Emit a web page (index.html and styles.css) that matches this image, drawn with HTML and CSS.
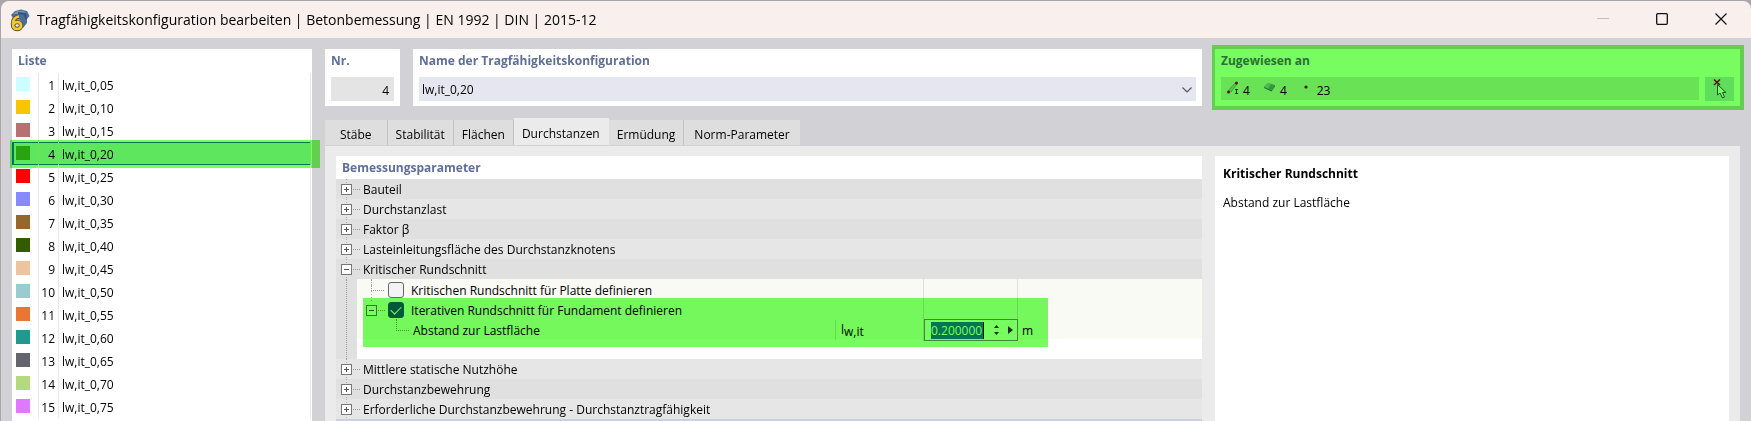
FILE: index.html
```html
<!DOCTYPE html>
<html lang="de">
<head>
    <meta charset="UTF-8">
    <meta name="viewport" content="width=device-width, initial-scale=1.0">
    <title>Tragfähigkeitskonfiguration bearbeiten</title>
    <link rel="stylesheet" href="styles.css">
</head>
<body>
    <div class="window">
        <header class="titlebar">
            <svg class="app-icon" width="20" height="24" viewBox="0 0 20 24">
                <path d="M1 7 L5 3 L11 1.500 L17 3 L19.500 8 L17 11 L17 15 L13 20 L10 12 L3 10 Z" fill="#4a6d9c"/>
                <path d="M3 6 L7 3 L14 3 L16 5 L9 6 Z" fill="#7795b8"/>
                <path d="M8 5 L15 6 L16 11" fill="none" stroke="#31547f" stroke-width="2"/>
                <path d="M9 8.500 C5 9 3 12 3 16 C3 19.500 4.500 21 7 21 C9.500 21 11 19.500 11 17.500 C11 15.500 9.500 14 7.500 14 C5 14 3.500 15 3 17" fill="none" stroke="#5c5640" stroke-width="4.500"/>
                <path d="M9 8.500 C5 9 3 12 3 16 C3 19.500 4.500 21 7 21 C9.500 21 11 19.500 11 17.500 C11 15.500 9.500 14 7.500 14 C5 14 3.500 15 3 17" fill="none" stroke="#f2ca2c" stroke-width="2.600"/>
            </svg>
            <h1>Tragfähigkeitskonfiguration bearbeiten | Betonbemessung | EN 1992 | DIN | 2015-12</h1>
            <div class="window-buttons">
                <button type="button" aria-label="Minimieren" disabled>
                    <svg width="12" height="12" viewBox="0 0 12 12"><path d="M0 5.5H12" stroke="#c5bfbe"/></svg>
                </button>
                <button type="button" aria-label="Maximieren">
                    <svg width="12" height="12" viewBox="0 0 12 12"><rect x="0.7" y="0.7" width="10.6" height="10.6" rx="1" fill="none" stroke="#111" stroke-width="1.3"/></svg>
                </button>
                <button type="button" aria-label="Schließen">
                    <svg width="12" height="12" viewBox="0 0 12 12"><path d="M0.5 0.5L11.5 11.5M11.5 0.5L0.5 11.5" stroke="#111" stroke-width="1.2"/></svg>
                </button>
            </div>
        </header>

        <main class="content">
            <section class="panel list">
                <h2>Liste</h2>
                <table>
                    <tr><td><i class="swatch c1"></i></td><td>1</td><td>lw,it_0,05</td></tr>
                    <tr><td><i class="swatch c2"></i></td><td>2</td><td>lw,it_0,10</td></tr>
                    <tr><td><i class="swatch c3"></i></td><td>3</td><td>lw,it_0,15</td></tr>
                    <tr class="selected"><td><i class="swatch c4"></i></td><td>4</td><td>lw,it_0,20<div class="marker"></div></td></tr>
                    <tr><td><i class="swatch c5"></i></td><td>5</td><td>lw,it_0,25</td></tr>
                    <tr><td><i class="swatch c6"></i></td><td>6</td><td>lw,it_0,30</td></tr>
                    <tr><td><i class="swatch c7"></i></td><td>7</td><td>lw,it_0,35</td></tr>
                    <tr><td><i class="swatch c8"></i></td><td>8</td><td>lw,it_0,40</td></tr>
                    <tr><td><i class="swatch c9"></i></td><td>9</td><td>lw,it_0,45</td></tr>
                    <tr><td><i class="swatch c10"></i></td><td>10</td><td>lw,it_0,50</td></tr>
                    <tr><td><i class="swatch c11"></i></td><td>11</td><td>lw,it_0,55</td></tr>
                    <tr><td><i class="swatch c12"></i></td><td>12</td><td>lw,it_0,60</td></tr>
                    <tr><td><i class="swatch c13"></i></td><td>13</td><td>lw,it_0,65</td></tr>
                    <tr><td><i class="swatch c14"></i></td><td>14</td><td>lw,it_0,70</td></tr>
                    <tr><td><i class="swatch c15"></i></td><td>15</td><td>lw,it_0,75</td></tr>
                </table>
            </section>

            <div class="editor">
                <div class="top">
                    <section class="panel field">
                        <h2><label for="nr">Nr.</label></h2>
                        <input type="text" id="nr" class="nr" value="4" readonly>
                    </section>
                    <section class="panel field">
                        <h2><label for="name">Name der Tragfähigkeitskonfiguration</label></h2>
                        <div class="select-wrap">
                            <select id="name">
                                <option>lw,it_0,20</option>
                            </select>
                            <svg class="chevron" width="10" height="6" viewBox="0 0 10 6"><path d="M0.5 0.5L5 5L9.5 0.5" fill="none" stroke="#555" stroke-width="1.2"/></svg>
                        </div>
                    </section>
                    <section class="panel field assigned">
                        <h2>Zugewiesen an</h2>
                        <div class="assigned-row">
                            <div class="assigned-items">
                                <svg width="12" height="14" viewBox="0 0 12 14">
                                    <path d="M1 9L8 1L10 2L4 10Z" fill="#b9c9d4" stroke="#68849a" stroke-width="0.7"/>
                                    <circle cx="1.5" cy="10" r="1.5" fill="#c01717"/>
                                    <circle cx="9.5" cy="1" r="1.5" fill="#c01717"/>
                                    <path d="M8 7.5H11M9.5 7.5V11.5M8 11.5H11" stroke="#333" fill="none"/>
                                </svg>
                                <span>4</span>
                                <svg width="12" height="14" viewBox="0 0 12 14">
                                    <path d="M0 5L4 1L11 3L7.5 8Z" fill="#6c98b8"/>
                                    <path d="M0 5L4 1L7 2L4 7Z" fill="#9fbdd0"/>
                                    <path d="M0 5L7.5 8L11 3V4.5L7.5 9.5L0 6Z" fill="#477591"/>
                                </svg>
                                <span>4</span>
                                <svg width="12" height="14" viewBox="0 0 12 14"><circle cx="5" cy="5" r="1.6" fill="#b01515"/></svg>
                                <span>23</span>
                            </div>
                            <button type="button" class="pick" aria-label="Auswählen">
                                <svg width="14" height="20" viewBox="0 0 14 20">
                                    <path d="M4.500 5.500V16L7 14L9.500 19L11.500 18L9.500 13.500H13Z" fill="#fff" stroke="#44505c"/>
                                    <path d="M1 0.500L7 6M7 0.500L1 6" stroke="#b51212" stroke-width="1.6"/>
                                </svg>
                            </button>
                        </div>
                        <div class="marker"></div>
                    </section>
                </div>

                <nav class="tabs">
                    <button type="button" class="tab first">Stäbe</button>
                    <button type="button" class="tab">Stabilität</button>
                    <button type="button" class="tab">Flächen</button>
                    <button type="button" class="tab active">Durchstanzen</button>
                    <button type="button" class="tab">Ermüdung</button>
                    <button type="button" class="tab last">Norm-Parameter</button>
                </nav>

                <div class="tab-page">
                    <section class="panel params">
                        <h2>Bemessungsparameter</h2>
                        <div class="tree">
                            <div class="node"><button type="button" class="toggle plus" aria-label="Bauteil"></button><span>Bauteil</span></div>
                            <div class="node"><button type="button" class="toggle plus" aria-label="Durchstanzlast"></button><span>Durchstanzlast</span></div>
                            <div class="node"><button type="button" class="toggle plus" aria-label="Faktor β"></button><span>Faktor β</span></div>
                            <div class="node"><button type="button" class="toggle plus" aria-label="Lasteinleitungsfläche"></button><span>Lasteinleitungsfläche des Durchstanzknotens</span></div>
                            <div class="node"><button type="button" class="toggle" aria-label="Kritischer Rundschnitt"></button><span>Kritischer Rundschnitt</span></div>
                            <div class="children">
                                <div class="row">
                                    <div class="cell name leaf"><input type="checkbox" id="platte"><label for="platte">Kritischen Rundschnitt für Platte definieren</label></div>
                                    <div class="cell value"></div>
                                    <div class="cell"></div>
                                </div>
                                <div class="row">
                                    <div class="cell name"><button type="button" class="toggle" aria-label="Iterativen Rundschnitt"></button><input type="checkbox" id="fundament" checked><label for="fundament">Iterativen Rundschnitt für Fundament definieren</label></div>
                                    <div class="cell value"></div>
                                    <div class="cell"></div>
                                </div>
                                <div class="row">
                                    <div class="cell name sub"><label for="abstand">Abstand zur Lastfläche</label><span class="symbol">l<sub>w,it</sub></span></div>
                                    <div class="cell value editing">
                                        <input type="text" id="abstand" value="0.200000">
                                        <svg width="20" height="12" viewBox="0 0 20 12"><path d="M0 4L2.500 1L5 4ZM0 8L2.500 11L5 8ZM14 2L19 6L14 10Z" fill="#333"/></svg>
                                    </div>
                                    <div class="cell unit">m</div>
                                </div>
                                <div class="marker"></div>
                            </div>
                            <div class="node"><button type="button" class="toggle plus" aria-label="Mittlere statische Nutzhöhe"></button><span>Mittlere statische Nutzhöhe</span></div>
                            <div class="node"><button type="button" class="toggle plus" aria-label="Durchstanzbewehrung"></button><span>Durchstanzbewehrung</span></div>
                            <div class="node"><button type="button" class="toggle plus" aria-label="Erforderliche Durchstanzbewehrung"></button><span>Erforderliche Durchstanzbewehrung - Durchstanztragfähigkeit</span></div>
                        </div>
                    </section>
                    <section class="panel info">
                        <h3>Kritischer Rundschnitt</h3>
                        <p>Abstand zur Lastfläche</p>
                    </section>
                </div>
            </div>
        </main>
    </div>
</body>
</html>
```
FILE: styles.css
```css
/* General */
* {
    box-sizing: border-box;
}

body {
    margin: 0;
    height: 100vh;
    overflow: hidden;
    background-color: #a9a5a8;
    font-family: "Open Sans", "Noto Sans", sans-serif;
    font-size: 12px;
    line-height: 20px;
    color: #000;
}

button,
input,
select {
    font: inherit;
    color: inherit;
    margin: 0;
    padding: 0;
    border: none;
    border-radius: 0;
    background: none;
}

svg {
    display: block;
    overflow: visible;
}

.window {
    display: flex;
    flex-direction: column;
    height: 100%;
    padding: 1px 0 0 1px;
}

/* Title bar */
.titlebar {
    display: flex;
    align-items: center;
    height: 37px;
    padding-left: 9px;
    background-color: #f9f0ee;
    border-radius: 8px 8px 0 0;
}

.titlebar h1 {
    flex: 1;
    margin: 0 0 0 7px;
    font-size: 14px;
    font-weight: normal;
}

.window-buttons {
    display: flex;
    align-self: flex-start;
    padding-right: 1px;
}

.window-buttons button {
    display: flex;
    align-items: center;
    justify-content: center;
    width: 59px;
    height: 36px;
}

/* Main area */
.content {
    flex: 1;
    display: grid;
    grid-template-columns: 300px 1fr;
    gap: 13px;
    min-height: 0;
    padding: 11px 11px 0;
    background-color: #d1d1d6;
}

.panel {
    background-color: #fff;
}

.panel h2 {
    margin: 0;
    padding: 0 6px;
    font-size: 12px;
    line-height: 23px;
    color: #5f6f99;
}

/* List */
.list table {
    width: 299px;
    margin-top: 1px;
    border-spacing: 0;
    table-layout: fixed;
}

.list tr {
    position: relative;
    height: 23px;
}

.list td {
    padding: 2px 0 0;
    border-right: 1px solid #e8e8e8;
}

.list td:nth-child(1) {
    width: 27px;
    padding: 0;
}

.list td:nth-child(2) {
    width: 20px;
    padding-right: 3px;
    text-align: right;
}

.list td:nth-child(3) {
    padding-left: 3px;
}

.swatch {
    display: block;
    width: 14px;
    height: 14px;
    margin: 0 0 1px 4px;
}

.c1 { background-color: #ccffff; }
.c2 { background-color: #f7c600; }
.c3 { background-color: #b97070; }
.c4 { background-color: #55a52b; }
.c5 { background-color: #ff0000; }
.c6 { background-color: #8888ff; }
.c7 { background-color: #94682b; }
.c8 { background-color: #335c00; }
.c9 { background-color: #ecc4a0; }
.c10 { background-color: #99cccc; }
.c11 { background-color: #e77733; }
.c12 { background-color: #22998f; }
.c13 { background-color: #62656d; }
.c14 { background-color: #b5d97d; }
.c15 { background-color: #df79ff; }

.list .selected td {
    background-color: #cce8ff;
    box-shadow: inset 0 1px #0078d7, inset 0 -1px #0078d7;
}

.list .selected td:first-child {
    box-shadow: inset 0 1px #0078d7, inset 0 -1px #0078d7, inset 2px 0 #0078d7;
}

/* Green highlighter */
.marker {
    position: absolute;
    background-color: #77fd5f;
    mix-blend-mode: multiply;
    pointer-events: none;
}

.selected .marker {
    inset: -2px -9px -3px -2px;
}

.assigned {
    position: relative;
}

.assigned .marker {
    inset: -4px -4px -4px -3px;
}

.children .marker {
    top: 19px;
    right: 154px;
    bottom: 12px;
    left: 6px;
}

/* Editor */
.editor {
    display: flex;
    flex-direction: column;
    min-height: 0;
}

.top {
    display: grid;
    grid-template-columns: 75px 1fr 525px;
    gap: 13px;
}

.field {
    height: 57px;
}

.nr {
    display: block;
    width: 63px;
    height: 24px;
    margin: 5px 6px;
    padding: 2px 5px 0 0;
    text-align: right;
    background-color: #e4e4e4;
}

.select-wrap {
    position: relative;
    margin: 5px 6px;
}

.select-wrap select {
    display: block;
    appearance: none;
    width: 100%;
    height: 24px;
    padding: 2px 3px 0;
    background-color: #e6e6f0;
}

.chevron {
    position: absolute;
    top: 10px;
    right: 4px;
}

.assigned-row {
    display: flex;
    gap: 6px;
    margin: 5px 6px;
}

.assigned-items {
    flex: 1;
    display: flex;
    align-items: center;
    gap: 4px;
    height: 23px;
    padding: 0 6px;
    background-color: #e4e4e4;
}

.assigned-items span {
    padding-top: 4px;
    margin-right: 10px;
}

.pick {
    display: flex;
    align-items: center;
    justify-content: center;
    width: 29px;
    height: 24px;
    background-color: #cce0f4;
}

/* Tabs */
.tabs {
    display: flex;
    align-items: flex-end;
    height: 39px;
    margin-bottom: 1px;
}

.tab {
    height: 25px;
    padding: 4px 8px 0;
    background-color: #dedede;
    border-right: 1px solid #c2c2c2;
}

.tab.first {
    padding: 4px 15px 0;
}

.tab.active {
    height: 27px;
    background-color: #ebebeb;
    border-color: #ebebeb;
}

.tab.last {
    padding: 4px 10px 0;
    border-right: none;
}

.tab-page {
    flex: 1;
    display: grid;
    grid-template-columns: 1fr 514px;
    gap: 13px;
    min-height: 0;
    padding: 10px 11px 0;
    background-color: #ebebeb;
}

/* Parameter tree */
.tree {
    border-bottom: 2px solid #cccfe0;
    background-color: #e0e0e0;
}

.node {
    display: flex;
    align-items: center;
    height: 20px;
    padding-left: 5px;
    background: repeating-linear-gradient(#aaa 0 1px, transparent 1px 3px) 10px 0 / 1px 100% no-repeat #e0e0e0;
}

.node:nth-child(even) {
    background-color: #e6e6e6;
}

.children ~ .node {
    background-color: #e6e6e6;
}

.children ~ .node:nth-child(even) {
    background-color: #e0e0e0;
}

.node span {
    margin-left: 4px;
    padding-top: 2px;
}

.toggle {
    position: relative;
    width: 11px;
    height: 11px;
    margin-right: 7px;
    border: 1px solid #777;
    background: linear-gradient(#555, #555) center / 5px 1px no-repeat #fff;
}

.toggle.plus {
    background: linear-gradient(#555, #555) center / 5px 1px no-repeat, linear-gradient(#555, #555) center / 1px 5px no-repeat #fff;
}

/* Dotted branch to the right of the box */
.toggle::after {
    content: "";
    position: absolute;
    top: 4px;
    left: 11px;
    width: 7px;
    border-top: 1px dotted #999;
}

.children {
    position: relative;
    margin-left: 21px;
    height: 80px;
    background-color: #fff;
}

.children::before {
    content: "";
    position: absolute;
    top: 0;
    left: -11px;
    height: 80px;
    border-left: 1px dotted #999;
}

.row {
    display: grid;
    grid-template-columns: 1fr 94px 184px;
    height: 20px;
    background-color: #fafaf5;
}

.cell {
    display: flex;
    align-items: center;
}

.cell label {
    padding-top: 2px;
}

.cell.name {
    padding-left: 9px;
    border-right: 1px solid #ddd;
}

.cell.value {
    border-right: 1px solid #ddd;
}

.cell .toggle {
    margin-right: 11px;
}

/* Dotted branch in front of a leaf */
.leaf::before,
.sub::before {
    content: "";
    align-self: flex-start;
    width: 13px;
    height: 11px;
    margin-right: 4px;
    border: 1px dotted #999;
    border-width: 0 0 1px 1px;
}

.cell.leaf {
    padding-left: 14px;
    background: repeating-linear-gradient(#aaa 0 1px, transparent 1px 3px) 14px 0 / 1px 100% no-repeat;
}

.cell.sub {
    padding-left: 39px;
}

.leaf::before {
    width: 12px;
}

.sub::before {
    width: 12px;
}

.cell input[type="checkbox"] {
    appearance: none;
    width: 16px;
    height: 16px;
    margin-right: 7px;
    border: 1px solid #666;
    border-radius: 3px;
    background-color: #f3f3f3;
}

.cell input[type="checkbox"]:checked {
    display: grid;
    place-items: center;
    border-color: #005a9e;
    background-color: #005a9e;
}

.cell input[type="checkbox"]:checked::before {
    content: "";
    width: 9px;
    height: 5px;
    margin-bottom: 3px;
    border: solid #fff;
    border-width: 0 0 1px 1px;
    rotate: -45deg;
}

.sub label {
    flex: 1;
}

.symbol {
    width: 88px;
    height: 20px;
    padding-left: 5px;
    border-left: 1px solid #ddd;
}

.symbol sub {
    font-size: 12px;
    line-height: 1;
    vertical-align: -2px;
}

.cell.editing {
    padding-left: 6px;
    border: 1px solid #8a8a99;
    background-color: #fff;
}

.editing input {
    width: 53px;
    height: 17px;
    padding-top: 1px;
    color: #fff;
    background-color: #0078d7;
    border-right: 1px solid #000;
}

.editing svg {
    margin-left: 10px;
}

.cell.unit {
    padding: 2px 0 0 4px;
}

/* Info */
.info {
    padding: 8px;
}

.info h3 {
    margin: 0 0 9px;
    font-size: 12px;
}

.info p {
    margin: 0;
}
```
